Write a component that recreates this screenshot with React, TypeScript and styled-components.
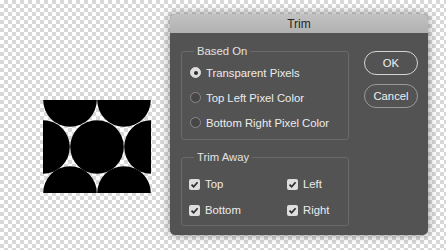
import React from "react";
import styled, { createGlobalStyle } from "styled-components";

const Global = createGlobalStyle`
  html, body { margin: 0; padding: 0; }
  body { font-family: "Liberation Sans", Arial, sans-serif; }
`;

const Page = styled.div`
  width: 446px;
  height: 250px;
  overflow: hidden;
  display: flex;
  align-items: flex-start;
  background-color: #ffffff;
  background-image:
    linear-gradient(45deg, #d8d8d8 25%, transparent 25%, transparent 75%, #d8d8d8 75%),
    linear-gradient(45deg, #d8d8d8 25%, transparent 25%, transparent 75%, #d8d8d8 75%);
  background-size: 8px 8px;
  background-position: 0 0, 4px 4px;
`;

const Artwork = styled.svg`
  margin: 100px 0 0 43px;
  flex: none;
  display: block;
`;

const Dialog = styled.div`
  margin: 14px 0 0 19px;
  width: 258px;
  height: 221px;
  flex: none;
  display: flex;
  flex-direction: column;
  border-radius: 5px;
  overflow: hidden;
  background: #535353;
  box-shadow: 0 0 10px rgba(0, 0, 0, 0.45);
`;

const TitleBar = styled.div`
  height: 19px;
  flex: none;
  display: flex;
  align-items: center;
  justify-content: center;
  background: linear-gradient(#c2c2c2, #b1b1b1);
  color: #262626;
  font-size: 12px;
`;

const Body = styled.div`
  flex: 1;
  display: flex;
  gap: 15px;
  padding: 18px 10px 10px 11px;
`;

const Groups = styled.div`
  width: 170px;
  display: flex;
  flex-direction: column;
  gap: 17px;
`;

const Group = styled.div<{ $h: number; $pt: number }>`
  position: relative;
  box-sizing: border-box;
  height: ${(p) => p.$h}px;
  border: 1px solid #6a6a6a;
  border-radius: 3px;
  padding: ${(p) => p.$pt}px 0 0 7px;
`;

const Legend = styled.span`
  position: absolute;
  top: -8px;
  left: 12px;
  padding: 0 3px;
  background: #535353;
  color: #e2e2e2;
  font-size: 11.3px;
  line-height: 14px;
`;

const RadioRow = styled.div`
  height: 25px;
  display: flex;
  align-items: center;
  gap: 5px;
  padding-left: 1px;
  color: #ececec;
  font-size: 11.3px;
`;

const Radio = styled.span<{ $on?: boolean }>`
  box-sizing: border-box;
  width: 11px;
  height: 11px;
  border-radius: 50%;
  flex: none;
  display: flex;
  align-items: center;
  justify-content: center;
  background: ${(p) => (p.$on ? "#dedede" : "#464646")};
  border: 1px solid ${(p) => (p.$on ? "#dedede" : "#8a8a8a")};
  &::after {
    content: "";
    width: 4px;
    height: 4px;
    border-radius: 50%;
    background: #2e2e2e;
    display: ${(p) => (p.$on ? "block" : "none")};
  }
`;

const CheckGrid = styled.div`
  display: grid;
  grid-template-columns: 98px auto;
  grid-auto-rows: 26px;
`;

const CheckRow = styled.div`
  display: flex;
  align-items: center;
  gap: 5px;
  color: #ececec;
  font-size: 11.3px;
`;

const Box = styled.span`
  width: 11px;
  height: 11px;
  border-radius: 2px;
  background: #dedede;
  flex: none;
  display: flex;
  align-items: center;
  justify-content: center;
`;

const Buttons = styled.div`
  display: flex;
  flex-direction: column;
  gap: 9px;
`;

const Button = styled.button<{ $primary?: boolean }>`
  box-sizing: border-box;
  width: 54px;
  height: 24px;
  border-radius: 12px;
  background: transparent;
  border: ${(p) => (p.$primary ? "1.5px solid #d4d4d4" : "1px solid #9a9a9a")};
  color: #f0f0f0;
  font-family: "Liberation Sans", Arial, sans-serif;
  font-size: 11.3px;
  padding: 0;
  display: flex;
  align-items: center;
  justify-content: center;
`;

const Check = () => (
  <svg width="9" height="9" viewBox="0 0 9 9">
    <path d="M1.5 4.6 L3.6 6.7 L7.6 2.2" fill="none" stroke="#2b2b2b" strokeWidth="1.7" />
  </svg>
);

const circles: [number, number][] = [
  [27, 0],
  [81, 0],
  [0, 47],
  [54, 47],
  [108, 47],
  [27, 93],
  [81, 93],
];

export default function App() {
  return (
    <>
      <Global />
      <Page>
        <Artwork width="108" height="93" viewBox="0 0 108 93">
          {circles.map(([cx, cy], i) => (
            <circle key={i} cx={cx} cy={cy} r={26.8} fill="#000" />
          ))}
        </Artwork>
        <Dialog>
          <TitleBar>Trim</TitleBar>
          <Body>
            <Groups>
              <Group $h={89} $pt={8}>
                <Legend>Based On</Legend>
                <RadioRow>
                  <Radio $on />
                  Transparent Pixels
                </RadioRow>
                <RadioRow>
                  <Radio />
                  Top Left Pixel Color
                </RadioRow>
                <RadioRow>
                  <Radio />
                  Bottom Right Pixel Color
                </RadioRow>
              </Group>
              <Group $h={69} $pt={13}>
                <Legend>Trim Away</Legend>
                <CheckGrid>
                  <CheckRow>
                    <Box><Check /></Box>Top
                  </CheckRow>
                  <CheckRow>
                    <Box><Check /></Box>Left
                  </CheckRow>
                  <CheckRow>
                    <Box><Check /></Box>Bottom
                  </CheckRow>
                  <CheckRow>
                    <Box><Check /></Box>Right
                  </CheckRow>
                </CheckGrid>
              </Group>
            </Groups>
            <Buttons>
              <Button $primary>OK</Button>
              <Button>Cancel</Button>
            </Buttons>
          </Body>
        </Dialog>
      </Page>
    </>
  );
}
